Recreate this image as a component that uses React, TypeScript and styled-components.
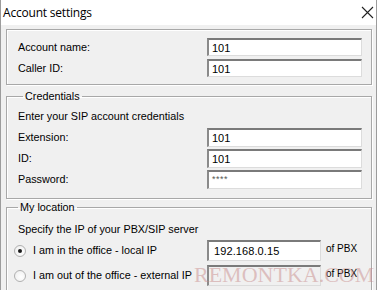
import React from 'react';
import styled, { createGlobalStyle } from 'styled-components';

const Global = createGlobalStyle`
  html, body { margin: 0; padding: 0; background: #f0f0f0; }
  body { font-family: "Liberation Sans", Arial, sans-serif; color: #000; }
`;

const Window = styled.div`
  position: relative;
  width: 377px;
  height: 290px;
  box-sizing: border-box;
  border-left: 1px solid #9c9c9c;
  border-right: 1px solid #9c9c9c;
  background: #f0f0f0;
  overflow: hidden;
  display: flex;
  flex-direction: column;
`;

const TitleBar = styled.div`
  height: 25px;
  flex: none;
  box-sizing: border-box;
  background: #fff;
  display: flex;
  align-items: center;
  justify-content: space-between;
  padding: 0 2px 1px 2px;
  font-family: "Open Sans", "Noto Sans", sans-serif;
  font-size: 12px;
  letter-spacing: -0.2px;
`;

const CloseBtn = styled.div`
  width: 14px;
  height: 14px;
  display: flex;
  align-items: center;
  justify-content: center;
`;

const Content = styled.div`
  display: flex;
  flex-direction: column;
  padding: 4px 4px 0 5px;
  font-size: 10.8px;
`;

const Panel = styled.div`
  border: 1px solid #a8a8a8;
  box-shadow: 1px 1px 0 #fff, inset 1px 1px 0 #fff;
  display: grid;
  grid-template-columns: 1fr 155px;
  row-gap: 3px;
  align-items: center;
  padding: 8px 9px 7px 11px;
`;

const Group = styled.fieldset<{ $top: number }>`
  margin: ${(p) => p.$top}px 0 0 0;
  border: 1px solid #a8a8a8;
  box-shadow: 1px 1px 0 #fff, inset 1px 1px 0 #fff;
  min-inline-size: 0;
  display: grid;
  align-items: center;
`;

const CredGroup = styled(Group)`
  grid-template-columns: 1fr 155px;
  row-gap: 2px;
  padding: 7px 9px 9px 11px;
`;

const LocGroup = styled(Group)`
  grid-template-columns: 1fr 114px 45px;
  row-gap: 4px;
  padding: 9px 5px 6px 6px;
`;

const Legend = styled.legend`
  margin-left: 5px;
  padding: 0 2px;
  line-height: 13px;
  font-size: 10.8px;
`;

const Label = styled.span`
  line-height: 13px;
  white-space: nowrap;
`;

const Note = styled.div<{ $indent?: number; $after: number }>`
  grid-column: 1 / -1;
  line-height: 13px;
  margin-bottom: ${(p) => p.$after}px;
  padding-left: ${(p) => p.$indent ?? 0}px;
  white-space: nowrap;
`;

const Field = styled.div<{ $h?: number; $disabled?: boolean }>`
  box-sizing: border-box;
  height: ${(p) => p.$h ?? 18}px;
  background: ${(p) => (p.$disabled ? '#f0f0f0' : '#fff')};
  border-style: solid;
  border-width: 2px 1px 1px 2px;
  border-color: #7a7a7a #dcdcdc #dcdcdc #8a8a8a;
  display: flex;
  align-items: center;
  padding-left: 3px;
  font-size: 11px;
  white-space: nowrap;
`;

const Secret = styled.span`
  font-size: 9px;
  color: #555;
  letter-spacing: 0.5px;
  margin-top: -3px;
`;

const IpText = styled.span`
  font-size: 11px;
  letter-spacing: 0.1px;
  padding-left: 2px;
`;

const RadioLine = styled.label`
  display: flex;
  align-items: center;
  gap: 7px;
  line-height: 13px;
  white-space: nowrap;
`;

const RadioDot = styled.span<{ $on?: boolean }>`
  width: 12px;
  height: 12px;
  margin-left: 1px;
  box-sizing: border-box;
  border-radius: 50%;
  border: 1px solid #b0b0b0;
  background: radial-gradient(circle at 60% 60%, #ffffff 0%, #ececec 100%);
  display: flex;
  align-items: center;
  justify-content: center;
  &::after {
    content: '';
    width: 4px;
    height: 4px;
    border-radius: 50%;
    background: ${(p) => (p.$on ? '#1a1a1a' : 'transparent')};
  }
`;

const Suffix = styled.span`
  padding-left: 5px;
  font-size: 10px;
  line-height: 13px;
  white-space: nowrap;
  margin-top: -4px;
`;

const Watermark = styled.div`
  position: absolute;
  left: 193px;
  top: 264px;
  font-family: "Liberation Serif", "Times New Roman", serif;
  font-size: 22px;
  line-height: 22px;
  color: rgba(200, 140, 140, 0.5);
  pointer-events: none;
  white-space: nowrap;
`;

function Radio({ on, children }: { on?: boolean; children: React.ReactNode }) {
  return (
    <RadioLine>
      <RadioDot $on={on} />
      <span>{children}</span>
    </RadioLine>
  );
}

export default function App() {
  return (
    <>
      <Global />
      <Window>
        <TitleBar>
          <span>Account settings</span>
          <CloseBtn>
            <svg width="13" height="13" viewBox="0 0 13 13">
              <path d="M1 1 L12 12 M12 1 L1 12" stroke="#222" strokeWidth="1.1" />
            </svg>
          </CloseBtn>
        </TitleBar>
        <Content>
          <Panel>
            <Label>Account name:</Label>
            <Field>101</Field>
            <Label>Caller ID:</Label>
            <Field>101</Field>
          </Panel>
          <CredGroup $top={5}>
            <Legend>Credentials</Legend>
            <Note $after={3}>Enter your SIP account credentials</Note>
            <Label>Extension:</Label>
            <Field $h={19}>101</Field>
            <Label>ID:</Label>
            <Field $h={19}>101</Field>
            <Label>Password:</Label>
            <Field $h={19}>
              <Secret>****</Secret>
            </Field>
          </CredGroup>
          <LocGroup $top={2}>
            <Legend>My location</Legend>
            <Note $indent={5} $after={0}>Specify the IP of your PBX/SIP server</Note>
            <Radio on>I am in the office - local IP</Radio>
            <Field $h={21}>
              <IpText>192.168.0.15</IpText>
            </Field>
            <Suffix>of PBX</Suffix>
            <Radio>I am out of the office - external IP</Radio>
            <Field $h={21} $disabled />
            <Suffix>of PBX</Suffix>
          </LocGroup>
        </Content>
        <Watermark>REMONTKA.COM</Watermark>
      </Window>
    </>
  );
}
